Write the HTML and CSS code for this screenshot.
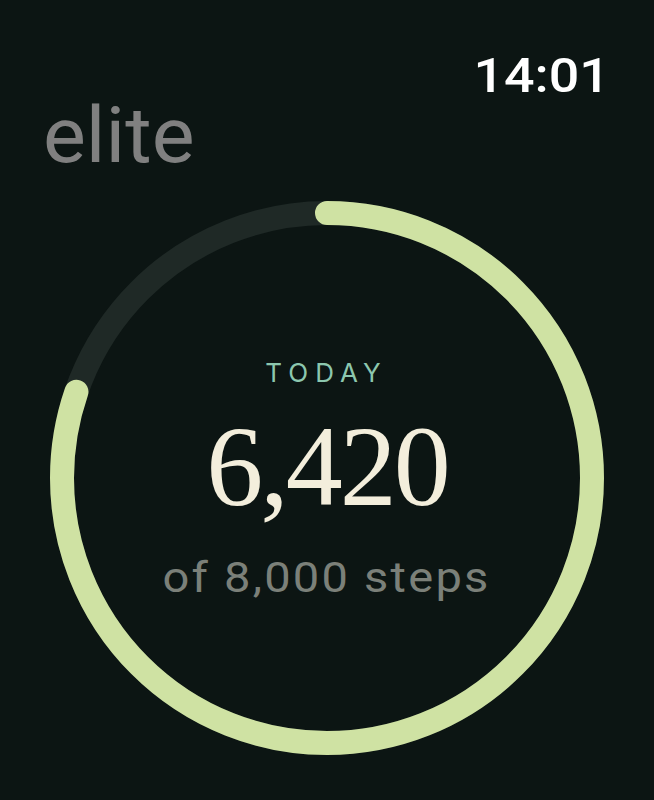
FILE: index.html
```html
<!DOCTYPE html>
<html>
<head>
<meta charset="utf-8">
<link rel="stylesheet" href="styles.css">
</head>
<body>
<div class="screen">
  <div class="status"><span class="time">14:01</span></div>
  <div class="title"><span class="title-text">elite</span></div>
  <div class="ring">
    <svg class="ring-svg" width="554" height="554" viewBox="0 0 554 554">
      <circle class="track" cx="277" cy="277" r="265"/>
      <circle class="progress" cx="277" cy="277" r="265" stroke-dasharray="1336.2 2000" transform="rotate(-90 277 277)"/>
    </svg>
    <div class="center">
      <div class="label">TODAY</div>
      <div class="value">6,420</div>
      <div class="goal">of 8,000 steps</div>
    </div>
  </div>
</div>
</body>
</html>
```
FILE: styles.css
```css
html, body {
  margin: 0;
  padding: 0;
  background: #0c1513;
}
.screen {
  width: 654px;
  height: 800px;
  background: #0c1513;
  font-family: Roboto, "Liberation Sans", sans-serif;
  display: flex;
  flex-direction: column;
  overflow: hidden;
}
.status {
  display: flex;
  justify-content: flex-end;
  padding: 48px 44px 0 0;
  height: 56px;
}
.time {
  display: inline-block;
  color: #ffffff;
  font-size: 48px;
  line-height: 56px;
  font-weight: 500;
  transform: scaleX(1.12);
  transform-origin: right center;
}
.title {
  color: #808080;
  font-size: 77px;
  line-height: 80px;
  padding-left: 43px;
  margin-top: -8px;
}
.title-text {
  display: inline-block;
  transform: scaleX(1.05);
  transform-origin: left center;
}
.ring {
  display: grid;
  width: 554px;
  height: 554px;
  margin: 25px 0 0 50px;
}
.ring-svg, .center {
  grid-area: 1 / 1;
}
.track {
  fill: none;
  stroke: #1f2926;
  stroke-width: 24;
}
.progress {
  fill: none;
  stroke: #cfe2a3;
  stroke-width: 24;
  stroke-linecap: round;
}
.center {
  display: flex;
  flex-direction: column;
  align-items: center;
  justify-content: center;
  padding-top: 6px;
  box-sizing: border-box;
}
.label {
  color: #8cc7ae;
  font-family: Inter, Roboto, sans-serif;
  font-size: 26px;
  letter-spacing: 7px;
  margin-right: 1px;
  line-height: 28px;
}
.value {
  color: #f3eedc;
  font-family: "Liberation Serif", serif;
  font-size: 114px;
  line-height: 120px;
  letter-spacing: -3px;
  margin-top: 20px;
}
.goal {
  color: #7b8079;
  font-size: 42px;
  line-height: 50px;
  letter-spacing: 2px;
  margin-top: 26px;
  transform: scaleX(1.12);
}
```
